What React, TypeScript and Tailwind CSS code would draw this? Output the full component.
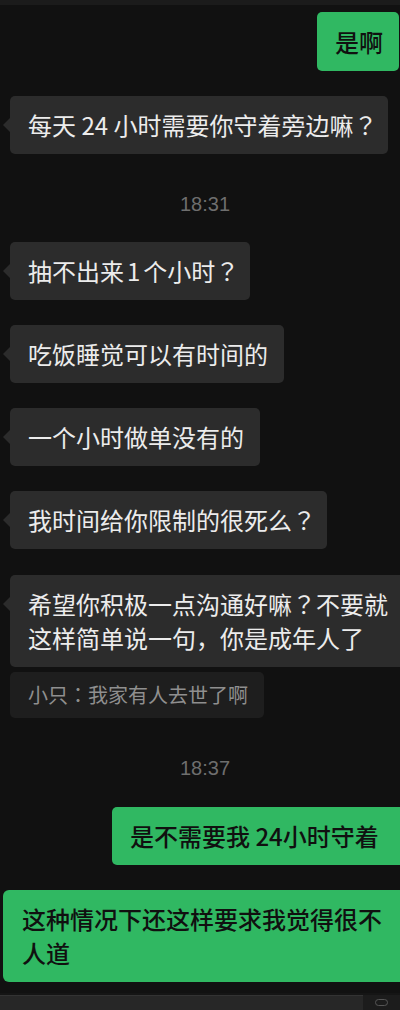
import React from "react";

const FONT = { fontFamily: '"Noto Sans CJK SC", "Noto Sans", sans-serif' };

function Q() {
  return (
    <span className="mr-[-5px]" style={{ fontFamily: '"Noto Sans CJK TC", sans-serif' }}>
      ？
    </span>
  );
}

function Left({ children, className = "" }: { children: React.ReactNode; className?: string }) {
  return (
    <div className={`relative ml-[10px] self-start rounded-[5px] bg-[#2c2c2c] py-[12px] pl-[18px] pr-[16px] text-[24px] leading-[34px] text-[#ececec] whitespace-nowrap ${className}`}>
      <span className="absolute left-[-7px] top-[22px] h-0 w-0 border-y-[7px] border-r-[7px] border-y-transparent border-r-[#2c2c2c]" />
      {children}
    </div>
  );
}

function Time({ children, className = "" }: { children: React.ReactNode; className?: string }) {
  return (
    <div
      className={`self-center pl-[10px] text-[20px] leading-[24px] text-[#6e6e6e] ${className}`}
      style={{ fontFamily: '"Liberation Sans", Arial, sans-serif' }}
    >
      {children}
    </div>
  );
}

export default function App() {
  return (
    <div className="flex h-[1010px] w-[400px] flex-col overflow-hidden bg-[#111111]" style={FONT}>
      <div className="h-[5px] w-full bg-[#1b1b1b]" />
      <div className="mr-[1px] mt-[7px] self-end rounded-[5px] bg-[#30b862] py-[12px] pl-[18px] pr-[16px] text-[24px] font-medium leading-[35px] text-[#101010] whitespace-nowrap">
        是啊
      </div>
      <Left className="mt-[25px]">
        每天 24 小时需要你守着旁边嘛
        <Q />
      </Left>
      <Time className="mt-[38px]">18:31</Time>
      <Left className="mt-[26px]">
        抽不出来<span className="mx-[3px]">1</span>个小时
        <Q />
      </Left>
      <Left className="mt-[25px]">吃饭睡觉可以有时间的</Left>
      <Left className="mt-[25px]">一个小时做单没有的</Left>
      <Left className="mt-[25px]">
        我时间给你限制的很死么
        <Q />
      </Left>
      <Left className="mt-[26px] w-[395px]">
        希望你积极一点沟通好嘛
        <span style={{ fontFamily: '"Noto Sans CJK TC", sans-serif' }}>？</span>
        不要就
        <br />
        这样简单说一句，你是成年人了
      </Left>
      <div className="ml-[10px] mt-[5px] self-start rounded-[5px] bg-[#1e1e1e] py-[10px] pl-[18px] pr-[16px] text-[20px] leading-[26px] text-[#8f8f8f] whitespace-nowrap">
        小只<span style={{ fontFamily: '"Noto Sans CJK TC", sans-serif' }}>：</span>我家有人去世了啊
      </div>
      <Time className="mt-[38px]">18:37</Time>
      <div className="ml-[112px] mt-[27px] rounded-l-[5px] bg-[#30b862] py-[12px] pl-[18px] text-[24px] font-medium leading-[34px] text-[#101010] whitespace-nowrap">
        是不需要我 24小时守着
      </div>
      <div className="ml-[3px] mt-[25px] rounded-l-[6px] bg-[#30b862] py-[12px] pl-[19px] text-[24px] font-medium leading-[34px] text-[#101010] whitespace-nowrap">
        这种情况下还这样要求我觉得很不
        <br />
        人道
      </div>
      <div className="mt-[11px] flex flex-1 items-end bg-[#151515]">
        <div className="flex h-[15px] w-full items-start">
          <div className="h-full w-[363px] border-t border-[#333333] bg-[#272727]" />
          <div className="flex h-full flex-1 items-center justify-center bg-[#1c1c1c]">
            <div className="h-[7px] w-[13px] rounded-full border border-[#555555]" />
          </div>
        </div>
      </div>
    </div>
  );
}
